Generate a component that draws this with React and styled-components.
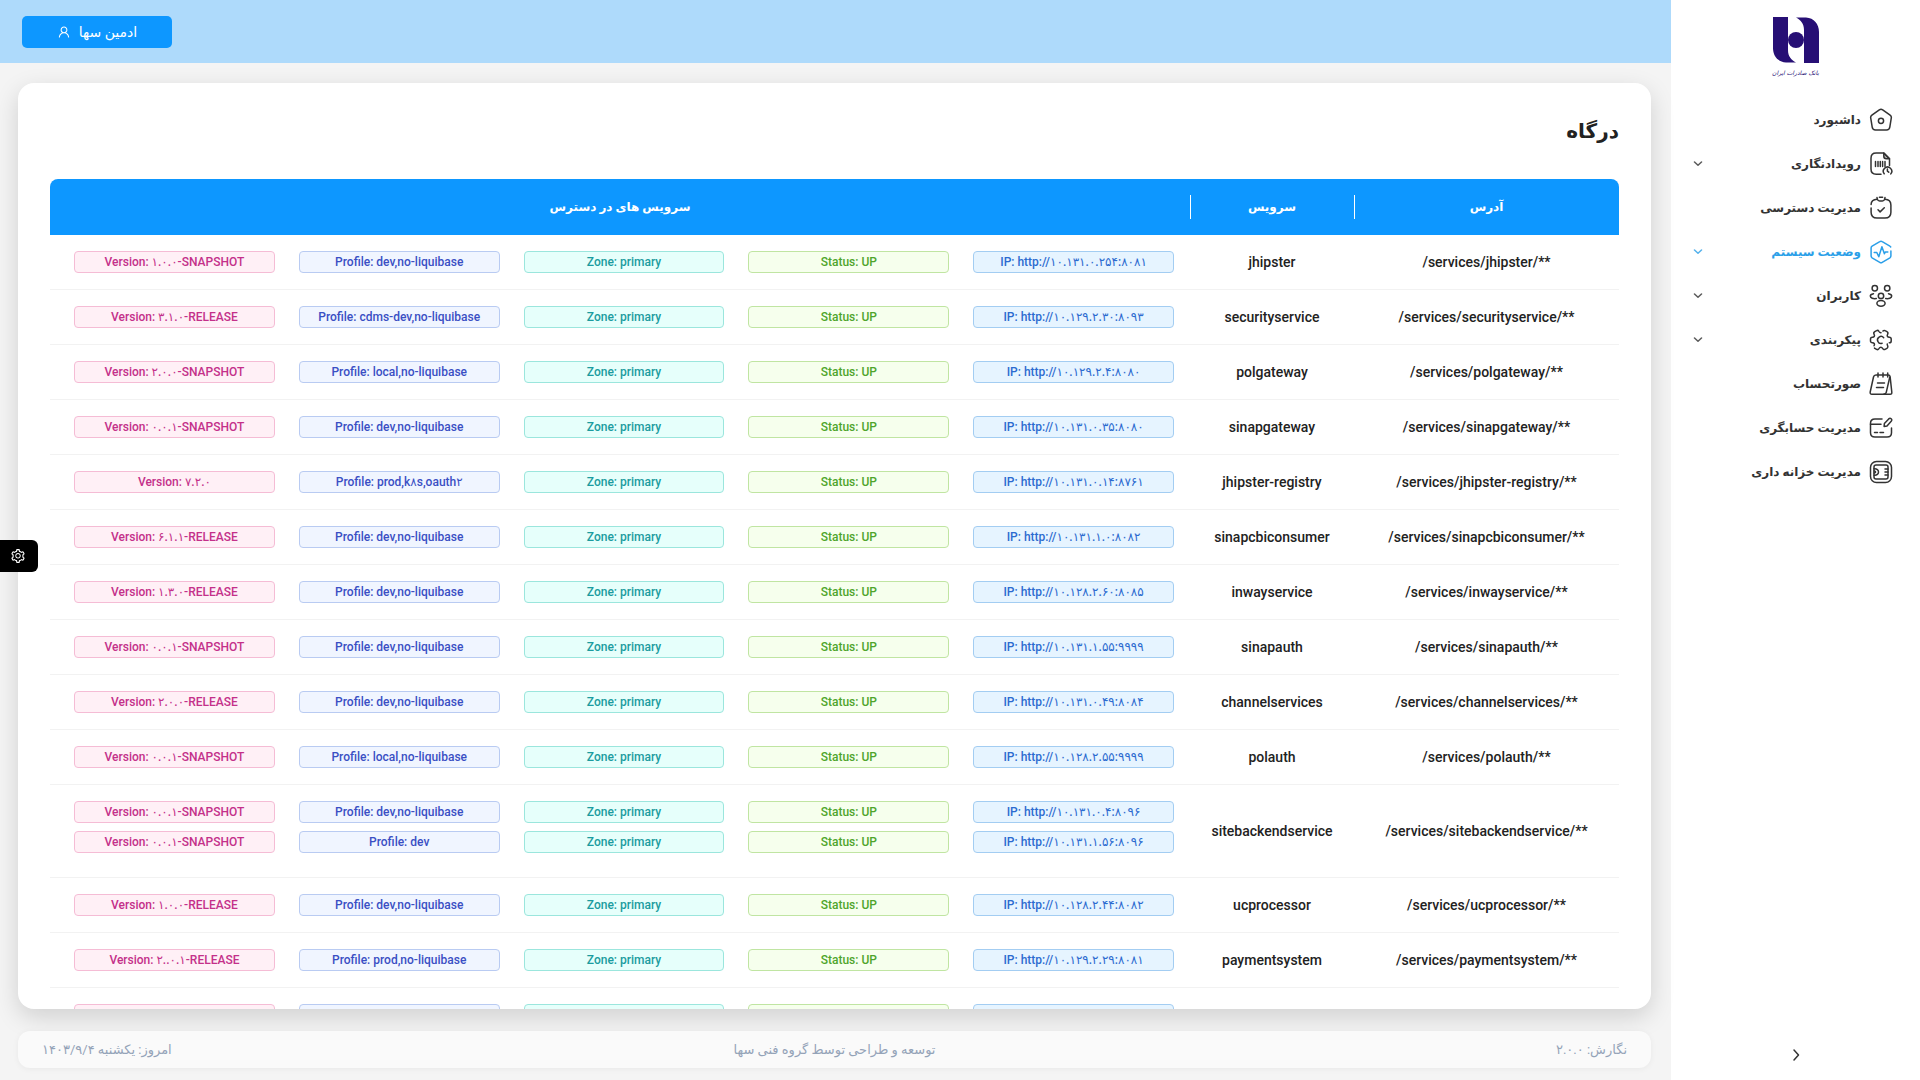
import styled, { createGlobalStyle } from 'styled-components';
import { AiOutlineSetting, AiOutlineUser } from 'react-icons/ai';

const GlobalStyle = createGlobalStyle`
  * {
    box-sizing: border-box;
  }

  body {
    margin: 0;
    background-color: #f4f4f4;
    color: #222;
    font-family: Roboto, 'DejaVu Sans', sans-serif;
    font-size: 14px;
    font-weight: 500;
  }

  h1, p, ul {
    margin: 0;
    padding: 0;
  }
`;

const Layout = styled.div`
  display: flex;
  height: 100vh;
  overflow: hidden;
`;

const Sidebar = styled.aside`
  display: flex;
  flex-direction: column;
  flex: 0 0 249px;
  background-color: #fff;
`;

const Brand = styled.a`
  display: flex;
  flex-direction: column;
  align-items: center;
  gap: 2px;
  height: 98px;
  padding-top: 17px;
  color: #270f75;
  text-decoration: none;
`;

const BrandName = styled.span`
  font-family: 'DejaVu Sans', sans-serif;
  font-size: 6px;
  font-style: italic;
  font-weight: 400;
  line-height: 16px;
  white-space: nowrap;
`;

const Menu = styled.ul`
  flex: 1;
  list-style: none;
`;

const MenuLink = styled.a`
  display: flex;
  align-items: center;
  gap: 8px;
  height: 44px;
  padding: 0 27px 0 21px;
  color: ${({ $active }) => ($active ? '#2b9fe8' : '#333')};
  font-size: 12px;
  font-weight: 700;
  text-decoration: none;

  span {
    flex: 1;
  }
`;

const CollapseButton = styled.button`
  height: 48px;
  padding: 0;
  border: none;
  background: none;
  color: #333;
  cursor: pointer;
`;

const Main = styled.div`
  display: flex;
  flex: 1;
  flex-direction: column;
  min-width: 0;
`;

const TopBar = styled.header`
  display: flex;
  flex: 0 0 63px;
  align-items: center;
  justify-content: flex-end;
  padding: 0 22px;
  background-color: #aedafb;
`;

const UserButton = styled.button`
  display: flex;
  align-items: center;
  justify-content: center;
  gap: 8px;
  width: 150px;
  height: 32px;
  border: none;
  border-radius: 5px;
  background-color: #0d97ff;
  color: #fff;
  font-family: inherit;
  font-size: 14px;
  font-weight: 500;
  cursor: pointer;
`;

const Content = styled.main`
  display: flex;
  flex: 1;
  flex-direction: column;
  gap: 22px;
  min-height: 0;
  padding: 20px 20px 12px 18px;
`;

const Card = styled.section`
  flex: 1;
  min-height: 0;
  overflow: hidden;
  padding: 32px 32px 0;
  border-radius: 16px;
  background-color: #fff;
  box-shadow: 0 8px 24px rgba(0, 0, 0, 0.15);
`;

const Title = styled.h1`
  margin-bottom: 32px;
  font-size: 20px;
  font-weight: 700;
  line-height: 32px;
`;

const Table = styled.table`
  width: 100%;
  border-spacing: 0;
  table-layout: fixed;
`;

const HeadCell = styled.th`
  position: relative;
  width: ${({ $width }) => $width || 'auto'};
  height: 56px;
  padding: 0;
  background-color: #0d97ff;
  color: #fff;
  font-size: 12px;
  font-weight: 700;

  &:first-child {
    border-top-right-radius: 8px;
  }

  &:last-child {
    border-top-left-radius: 8px;
  }

  &:not(:last-child)::after {
    content: '';
    position: absolute;
    top: 16px;
    bottom: 16px;
    left: 0;
    width: 1px;
    background-color: #fff;
  }
`;

const Cell = styled.td`
  padding: 16px 0;
  border-bottom: 1px solid #f2f2f2;
  text-align: center;
`;

const InstanceCell = styled(Cell)`
  padding: 16px 16px 16px 24px;
`;

const Instance = styled.div`
  display: flex;
  gap: 24px;
  margin-bottom: ${({ $spaced }) => ($spaced ? '8px' : '0')};
`;

const tagColors = {
  blue: ['#2c6bd0', '#a3cdf2', '#e6f4ff'],
  green: ['#4fa52c', '#c0e5a2', '#f6ffed'],
  cyan: ['#1b9c9f', '#9be6dd', '#e6fffb'],
  geekblue: ['#3a4fc4', '#b9cbf2', '#f0f5ff'],
  magenta: ['#c4308a', '#f5bcd5', '#fff0f6'],
};

const Tag = styled.span`
  flex: 1;
  min-height: 22px;
  border: 1px solid ${({ $color }) => tagColors[$color][1]};
  border-radius: 4px;
  background-color: ${({ $color }) => tagColors[$color][2]};
  color: ${({ $color }) => tagColors[$color][0]};
  font-size: 12px;
  line-height: 20px;
  white-space: nowrap;
`;

const Footer = styled.footer`
  display: grid;
  grid-template-columns: 1fr auto 1fr;
  align-items: center;
  height: 37px;
  padding: 0 24px;
  border-radius: 12px;
  background-color: #fafafa;
  box-shadow: 0 1px 6px rgba(0, 0, 0, 0.05);
  color: #94a3b8;
  font-size: 13px;
  font-weight: 400;

  p:last-child {
    text-align: left;
  }
`;

const SettingsButton = styled.button`
  position: fixed;
  top: 50%;
  left: 0;
  display: flex;
  align-items: center;
  justify-content: center;
  width: 38px;
  height: 32px;
  padding: 0 2px 0 0;
  border: none;
  border-radius: 0 6px 6px 0;
  background-color: #000;
  color: #fff;
  cursor: pointer;
`;

const StrokeSvg = styled.svg`
  flex: none;
  fill: none;
  stroke: currentColor;
  stroke-width: 1.5;
  stroke-linecap: round;
  stroke-linejoin: round;
`;

const ChevronSvg = styled(StrokeSvg)`
  opacity: 0.8;
`;

function MenuIcon({ children }) {
  return (
    <StrokeSvg width="24" height="24" viewBox="0 0 24 24" aria-hidden="true">
      {children}
    </StrokeSvg>
  );
}

const icons = {
  dashboard: (
    <MenuIcon>
      <path d="M10.300 1.800 2.900 7.200C1.900 7.900 1.500 8.600 1.700 9.800l1.500 9.400c.3 1.900 1.400 2.800 3.300 2.800h11c1.900 0 3-.9 3.300-2.800l1.500-9.400c.2-1.200-.2-1.900-1.200-2.600l-7.400-5.400c-1.300-.8-2.100-.8-3.400 0Z" />
      <circle cx="12" cy="12.800" r="2.600" />
    </MenuIcon>
  ),
  events: (
    <MenuIcon>
      <path d="M12 22.200H7.200c-3.600 0-5.200-1.600-5.200-5.200V6.200C2 2.600 3.600 1 7.200 1h7.600l5.700 5.700v6.800" />
      <path d="M14.800 1v3.200c0 1.700.8 2.500 2.500 2.500h3.200L14.800 1Z" fill="currentColor" fillOpacity=".35" />
      <path d="M6.500 9.500v5M9 9.500v5M11.300 9.500v5M13.600 9.500v5M16 9.500v5" />
      <path d="M15.200 21.800a4.200 4.200 0 1 1 6.600.1M18.400 16.900v2.300l1.300 1" />
    </MenuIcon>
  ),
  access: (
    <MenuIcon>
      <path d="M8.100 3.300C4 3.500 2.100 5.200 2.100 8.600M2.100 12v4.300c0 4 1.700 5.800 5.900 5.800h8c4.200 0 5.900-1.800 5.900-5.800V9c0-4-1.900-5.500-6-5.700" />
      <path d="M8 1.500c.2 2.500 1.100 3.400 2.700 3.400h2.600c1.600 0 2.500-.9 2.700-3.400M10.400 1.200h3.200" />
      <path d="m9 13.800 2.100 2.100 4.200-4.200" />
    </MenuIcon>
  ),
  status: (
    <MenuIcon>
      <path d="M21.900 11v5.100c0 .8-.4 1.300-1 1.700l-7.700 4.500c-.8.5-1.600.5-2.400 0l-7.700-4.500c-.6-.4-1-.9-1-1.700V7.900c0-.8.4-1.300 1-1.700l7.700-4.500c.8-.5 1.600-.5 2.400 0l7.700 4.500c.4.2.6.5.8.8" />
      <path d="M5.200 12.500h2.600l2 4.200 3.100-10 2.500 7 1-1.800h2.400" />
    </MenuIcon>
  ),
  users: (
    <MenuIcon>
      <circle cx="5.800" cy="4.200" r="2.700" />
      <circle cx="18.200" cy="4.200" r="2.700" />
      <circle cx="12" cy="11.900" r="2.700" />
      <ellipse cx="12" cy="19.300" rx="4.100" ry="2.900" />
      <path d="M7.300 14.500c-3 .5-6-.4-6-2.400 0-1.300 1.400-2.100 3.200-2.400M16.700 14.500c3 .5 6-.4 6-2.400 0-1.300-1.400-2.100-3.200-2.400" />
    </MenuIcon>
  ),
  config: (
    <MenuIcon>
      <path
        d="M1.500 12.900v-1.800c0-1 .9-1.900 1.900-1.900 1.900 0 2.600-1.300 1.700-2.900-.5-.9-.2-2.100.7-2.600l1.800-1c.8-.5 1.800-.2 2.300.6l.1.200c.9 1.600 2.800 1.600 3.700 0l.1-.2c.5-.8 1.500-1.100 2.300-.6l1.800 1c.9.500 1.200 1.700.7 2.600-.9 1.600-.2 2.900 1.700 2.900 1 0 1.900.9 1.900 1.900v1.800c0 1-.9 1.900-1.900 1.900-1.900 0-2.600 1.300-1.700 2.900.5.900.2 2.100-.7 2.600l-1.800 1c-.8.5-1.800.2-2.300-.6l-.1-.2c-.9-1.600-2.800-1.600-3.700 0l-.1.200c-.5.8-1.500 1.100-2.300.6l-1.800-1c-.9-.5-1.200-1.700-.7-2.600.9-1.600.2-2.900-1.700-2.900-1 0-1.900-.9-1.900-1.900Z"
        strokeDasharray="19 2.500"
      />
      <path d="M14.700 9.700a3.500 3.500 0 1 0-1.600 5.600" />
    </MenuIcon>
  ),
  invoice: (
    <MenuIcon>
      <path d="M7 3h12.200c1.100 0 1.700.6 1.900 1.700L22.800 20c.2 1.500-.4 2.200-1.700 2.200H2.900c-1.400 0-2-.8-1.700-2.200L4.500 5C4.800 3.700 5.600 3 7 3Z" />
      <path d="M20.700 5.500 17.300 20.200c-.4 1.400-1.200 2-2.600 2" />
      <path d="M9 1v4M14 1v4M18.700 1v4M8.500 11h7M7.500 15.500h7" />
    </MenuIcon>
  ),
  audit: (
    <MenuIcon>
      <path d="M13 3H6C3 3 1.500 4.500 1.500 7.300v9.400C1.500 19.700 3 21 6 21h12c3 0 4.500-1.300 4.500-4.300V12" />
      <path d="M1.500 8.300H12M5.500 16.500h3M11 16.500h3.500" />
      <path d="m15.400 7.500 4.300-4.600c1.700-1.600 4 .5 2.500 2.300l-4.200 4.700-2.900.5.3-2.900Z" />
    </MenuIcon>
  ),
  treasury: (
    <MenuIcon>
      <rect x="1.500" y="1.500" width="21" height="21" rx="6" />
      <rect x="5" y="5" width="14" height="14" rx="2" />
      <path d="M5 8.800c6-.8 6 7.200 0 6.400M5 11c2-.3 2 2.300 0 2M16 9h3M16 12h3M16 15h3" />
    </MenuIcon>
  ),
};

const menu = [
  { icon: 'dashboard', label: 'داشبورد' },
  { icon: 'events', label: 'رویدادنگاری', nested: true },
  { icon: 'access', label: 'مدیریت دسترسی' },
  { icon: 'status', label: 'وضعیت سیستم', nested: true, active: true },
  { icon: 'users', label: 'کاربران', nested: true },
  { icon: 'config', label: 'پیکربندی', nested: true },
  { icon: 'invoice', label: 'صورتحساب' },
  { icon: 'audit', label: 'مدیریت حسابگری' },
  { icon: 'treasury', label: 'مدیریت خزانه داری' },
];

// [ip, profile, version] for every running instance
const services = [
  { name: 'jhipster', instances: [['10.131.0.254:8081', 'dev,no-liquibase', '1.0.0-SNAPSHOT']] },
  { name: 'securityservice', instances: [['10.129.2.30:8093', 'cdms-dev,no-liquibase', '3.1.0-RELEASE']] },
  { name: 'polgateway', instances: [['10.129.2.4:8080', 'local,no-liquibase', '2.0.0-SNAPSHOT']] },
  { name: 'sinapgateway', instances: [['10.131.0.35:8080', 'dev,no-liquibase', '0.0.1-SNAPSHOT']] },
  { name: 'jhipster-registry', instances: [['10.131.0.14:8761', 'prod,k8s,oauth2', '7.2.0']] },
  { name: 'sinapcbiconsumer', instances: [['10.131.1.0:8082', 'dev,no-liquibase', '6.1.1-RELEASE']] },
  { name: 'inwayservice', instances: [['10.128.2.60:8085', 'dev,no-liquibase', '1.3.0-RELEASE']] },
  { name: 'sinapauth', instances: [['10.131.1.55:9999', 'dev,no-liquibase', '0.0.1-SNAPSHOT']] },
  { name: 'channelservices', instances: [['10.131.0.49:8084', 'dev,no-liquibase', '2.0.0-RELEASE']] },
  { name: 'polauth', instances: [['10.128.2.55:9999', 'local,no-liquibase', '0.0.1-SNAPSHOT']] },
  {
    name: 'sitebackendservice',
    instances: [
      ['10.131.0.4:8096', 'dev,no-liquibase', '0.0.1-SNAPSHOT'],
      ['10.131.1.56:8096', 'dev', '0.0.1-SNAPSHOT'],
    ],
  },
  { name: 'ucprocessor', instances: [['10.128.2.44:8082', 'dev,no-liquibase', '1.0.0-RELEASE']] },
  { name: 'paymentsystem', instances: [['10.129.2.29:8081', 'prod,no-liquibase', '2..0.1-RELEASE']] },
];

function toPersianDigits(text) {
  return text.replace(/\d/g, digit => '۰۱۲۳۴۵۶۷۸۹'[digit]);
}

function Logo() {
  return (
    <svg width="46" height="46" viewBox="0 0 46 46" fill="currentColor" aria-hidden="true">
      <path d="M0 0h15v33c0 6 3 10 8 12.500H13C5 45 0 39 0 31V0Z" />
      <path d="M46 46H31V13c0-6-3-10-8-12.500h10C41 1 46 7 46 15v31Z" />
      <circle cx="23" cy="23" r="8" />
    </svg>
  );
}

function ServiceRow({ service }) {
  return (
    <tr>
      <Cell dir="ltr">{`/services/${service.name}/**`}</Cell>
      <Cell dir="ltr">{service.name}</Cell>
      <InstanceCell>
        {service.instances.map(([ip, profile, version]) => (
          <Instance key={ip} $spaced={service.instances.length > 1}>
            <Tag $color="blue" dir="ltr">{toPersianDigits(`IP: http://${ip}`)}</Tag>
            <Tag $color="green" dir="ltr">Status: UP</Tag>
            <Tag $color="cyan" dir="ltr">Zone: primary</Tag>
            <Tag $color="geekblue" dir="ltr">{toPersianDigits(`Profile: ${profile}`)}</Tag>
            <Tag $color="magenta" dir="ltr">{toPersianDigits(`Version: ${version}`)}</Tag>
          </Instance>
        ))}
      </InstanceCell>
    </tr>
  );
}

function PendingRow() {
  return (
    <tr>
      <Cell />
      <Cell />
      <InstanceCell>
        <Instance>
          {Object.keys(tagColors).map(color => (
            <Tag key={color} $color={color} />
          ))}
        </Instance>
      </InstanceCell>
    </tr>
  );
}

function App() {
  return (
    <>
      <GlobalStyle />
      <Layout dir="rtl">
        <Sidebar>
          <Brand href="#">
            <Logo />
            <BrandName>بانک صادرات ایران</BrandName>
          </Brand>
          <Menu>
            {menu.map(item => (
              <li key={item.icon}>
                <MenuLink href="#" $active={item.active}>
                  {icons[item.icon]}
                  <span>{item.label}</span>
                  {item.nested && (
                    <ChevronSvg width="12" height="12" viewBox="0 0 12 12" aria-hidden="true">
                      <path d="M2.500 4 6 7.300 9.500 4" />
                    </ChevronSvg>
                  )}
                </MenuLink>
              </li>
            ))}
          </Menu>
          <CollapseButton aria-label="بستن منو">
            <StrokeSvg width="14" height="14" viewBox="0 0 14 14" aria-hidden="true">
              <path d="m5 2 4.500 5L5 12" />
            </StrokeSvg>
          </CollapseButton>
        </Sidebar>

        <Main>
          <TopBar>
            <UserButton>
              ادمین سها
              <AiOutlineUser size={14} />
            </UserButton>
          </TopBar>
          <Content>
            <Card>
              <Title>درگاه</Title>
              <Table>
                <thead>
                  <tr>
                    <HeadCell $width="265px">آدرس</HeadCell>
                    <HeadCell $width="164px">سرویس</HeadCell>
                    <HeadCell>سرویس های در دسترس</HeadCell>
                  </tr>
                </thead>
                <tbody>
                  {services.map(service => (
                    <ServiceRow key={service.name} service={service} />
                  ))}
                  <PendingRow />
                </tbody>
              </Table>
            </Card>
            <Footer>
              <p>نگارش: ۲.۰.۰</p>
              <p>توسعه و طراحی توسط گروه فنی سها</p>
              <p>امروز: یکشنبه ۱۴۰۳/۹/۴</p>
            </Footer>
          </Content>
        </Main>
      </Layout>
      <SettingsButton aria-label="تنظیمات">
        <AiOutlineSetting size={16} />
      </SettingsButton>
    </>
  );
}

export default App;
